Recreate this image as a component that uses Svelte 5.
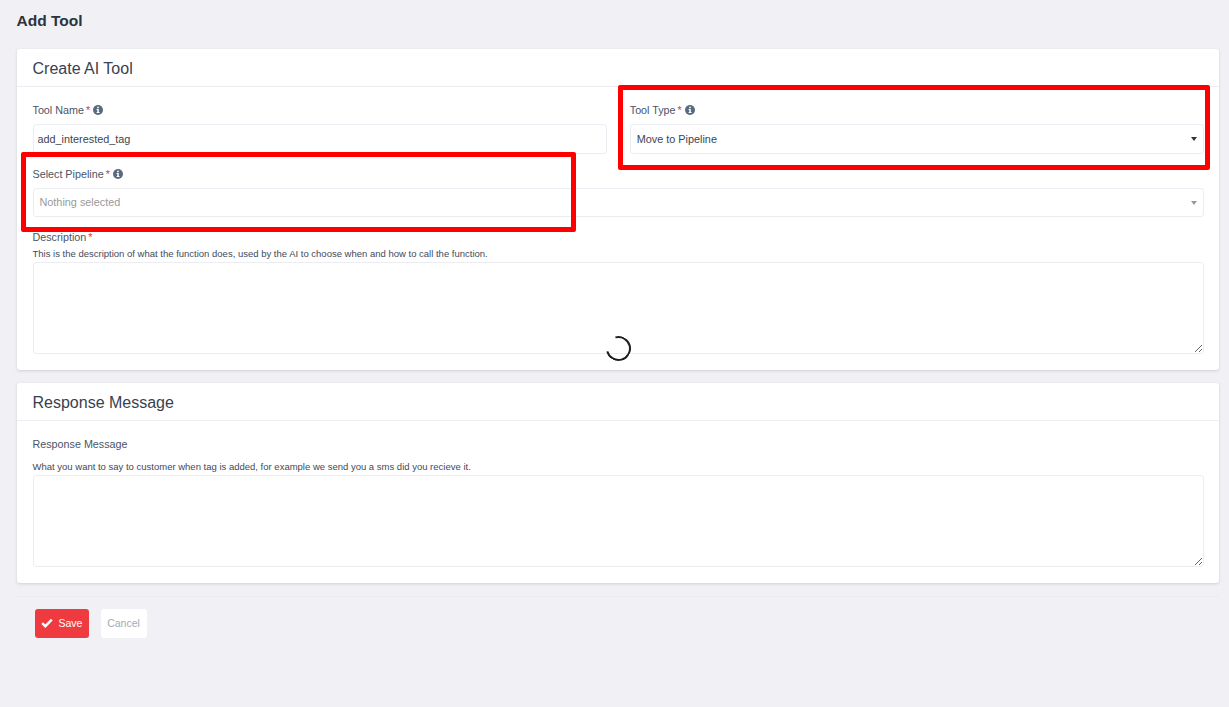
<script>
	let toolName = 'add_interested_tag';
</script>

{#snippet info()}
	<svg class="info" viewBox="0 0 10 10" aria-hidden="true">
		<circle cx="5" cy="5" r="5" fill="#5a6a7e" />
		<rect x="4.2" y="1.7" width="1.6" height="1.5" fill="#fff" />
		<path d="M3.6 4.1h2.2v3h.7v.9H3.6v-.9h.7V5h-.7z" fill="#fff" />
	</svg>
{/snippet}

<main class="page">
	<h1>Add Tool</h1>

	<section class="card">
		<header>Create AI Tool</header>
		<div class="body">
			<div class="row">
				<div class="field">
					<span class="label">Tool Name <b>*</b> {@render info()}</span>
					<input type="text" bind:value={toolName} />
				</div>
				<div class="field">
					<span class="label">Tool Type <b>*</b> {@render info()}</span>
					<div class="select">Move to Pipeline<i class="caret"></i></div>
				</div>
			</div>
			<div class="field">
				<span class="label">Select Pipeline <b>*</b> {@render info()}</span>
				<div class="select empty">Nothing selected<i class="caret"></i></div>
			</div>
			<div class="field desc">
				<span class="label">Description <b>*</b></span>
				<small>This is the description of what the function does, used by the AI to choose when and how to call the function.</small>
				<textarea></textarea>
			</div>
		</div>
	</section>

	<section class="card second">
		<header>Response Message</header>
		<div class="body">
			<div class="field desc">
				<span class="label msg">Response Message</span>
				<small>What you want to say to customer when tag is added, for example we send you a sms did you recieve it.</small>
				<textarea></textarea>
			</div>
		</div>
	</section>

	<footer>
		<button class="save">
			<svg viewBox="0 0 12 10" aria-hidden="true"><path d="M1.2 5.2 4.3 8.2 10.8 1.6" fill="none" stroke="#fff" stroke-width="2.4" /></svg>
			Save
		</button>
		<button class="cancel">Cancel</button>
	</footer>

	<!-- annotations drawn over the screenshot -->
	<div class="mark mark-type"></div>
	<div class="mark mark-pipeline"></div>
	<div class="spinner"></div>
</main>

<style>
	:global(body) {
		margin: 0;
		background: #f0f0f5;
	}
	.page {
		position: relative;
		box-sizing: border-box;
		height: 707px;
		padding: 12px 10px 0 16.5px;
		font-family: 'Liberation Sans', Arial, sans-serif;
		color: #3f4a5a;
		overflow: hidden;
	}
	h1 {
		margin: 0 0 19px;
		font-size: 15.5px;
		line-height: 18px;
		font-weight: 700;
		color: #2b3340;
	}
	.card {
		background: #fff;
		border-radius: 3px;
		box-shadow: 0 1px 3px rgba(60, 60, 80, 0.18);
	}
	.second {
		margin-top: 13px;
	}
	header {
		height: 38px;
		box-sizing: border-box;
		padding: 1px 16px 0;
		font-size: 16px;
		line-height: 37px;
		color: #38414f;
		border-bottom: 1px solid #ebedf2;
	}
	.body {
		padding: 16px 15px 16px 16px;
	}
	.row {
		display: grid;
		grid-template-columns: 1fr 1fr;
		column-gap: 23px;
	}
	.field {
		display: flex;
		flex-direction: column;
		margin-bottom: 12.5px;
	}
	.desc {
		margin-bottom: 0;
	}
	.label {
		display: flex;
		align-items: center;
		gap: 2px;
		height: 14px;
		margin-bottom: 7px;
		font-size: 10.75px;
		line-height: 14px;
		color: #4a5565;
	}
	.label b {
		font-weight: 400;
		color: #e53935;
	}
	.desc .label {
		margin-bottom: 3px;
	}
	.desc .msg {
		margin-bottom: 9px;
	}
	.info {
		width: 10px;
		height: 10px;
		margin-left: 1px;
	}
	small {
		display: block;
		margin-bottom: 1px;
		font-size: 9.5px;
		line-height: 14px;
		color: #3f4a5a;
	}
	input,
	.select,
	textarea {
		box-sizing: border-box;
		width: 100%;
		border: 1px solid #ebedf2;
		border-radius: 3px;
		background: #fff;
		font-family: inherit;
	}
	input,
	.select {
		height: 29.5px;
		font-size: 10.85px;
		color: #40454f;
		outline: none;
	}
	.row input,
	.row .select {
		height: 30px;
	}
	input {
		padding: 0 4px;
	}
	.select {
		position: relative;
		padding: 0 6px;
		line-height: 28px;
	}
	.empty {
		color: #9a9a9a;
		line-height: 26px;
	}
	.caret {
		position: absolute;
		right: 6px;
		top: 12px;
		border-style: solid;
		border-width: 4px 3px 0;
		border-color: #333 transparent transparent;
	}
	.empty .caret {
		border-top-color: #999;
	}
	textarea {
		display: block;
		height: 92px;
		outline: none;
	}
	footer {
		display: flex;
		gap: 12px;
		margin-top: 13px;
		padding: 12px 18px 0;
		border-top: 1px solid #ebecf0;
	}
	button {
		height: 29px;
		font-family: inherit;
		font-size: 10.5px;
		border-radius: 3px;
		border: 0;
		padding: 0;
	}
	.save {
		display: flex;
		align-items: center;
		justify-content: center;
		gap: 6px;
		width: 54px;
		background: #ef3b3f;
		color: #fff;
	}
	.save svg {
		width: 12px;
		height: 10px;
	}
	.cancel {
		width: 46px;
		background: #fff;
		color: #a4aab6;
	}
	.mark {
		position: absolute;
		box-sizing: border-box;
		border: 5px solid #f00;
		border-radius: 2px;
	}
	.mark-type {
		left: 618px;
		top: 85px;
		width: 592px;
		height: 85px;
	}
	.mark-pipeline {
		left: 21px;
		top: 152px;
		width: 555px;
		height: 80px;
	}
	.spinner {
		position: absolute;
		left: 606px;
		top: 336px;
		width: 25px;
		height: 25px;
		box-sizing: border-box;
		border: 2px solid #1c1c1c;
		border-left-color: transparent;
		border-radius: 50%;
		transform: rotate(30deg);
	}
</style>
